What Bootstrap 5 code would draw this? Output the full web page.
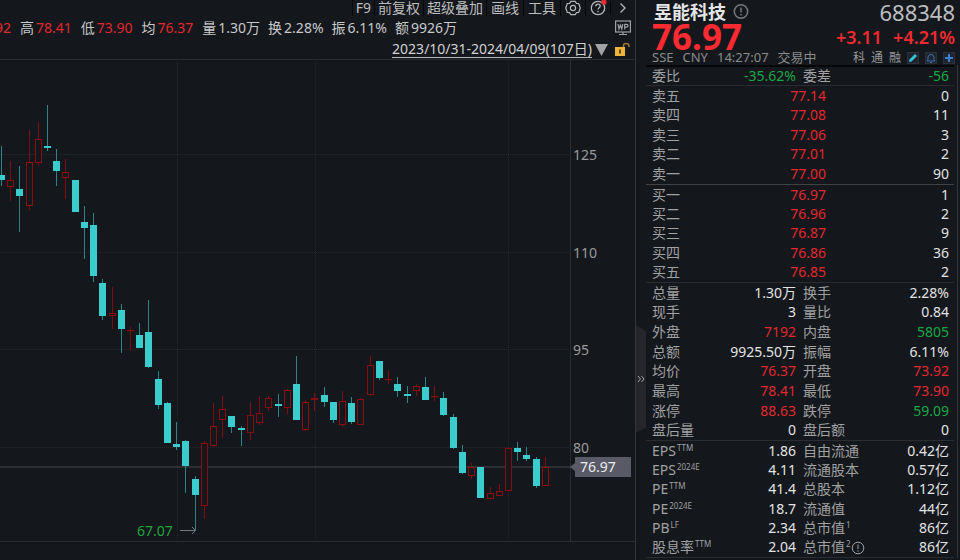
<!DOCTYPE html>
<html lang="zh-CN">
<head>
<meta charset="utf-8">
<meta name="viewport" content="width=device-width, initial-scale=1">
<title>昱能科技 688348</title>
<link href="https://cdn.jsdelivr.net/npm/bootstrap@5.3.0/dist/css/bootstrap.min.css" rel="stylesheet">
<style>
:root{--ink:#14171b;--up:#e2282f;--down:#18a846;--label:#a0a1a3;--value:#e2e3e5;--rule:#2a2c31}
body{background:var(--ink);color:#c8c9cb;font-family:"Noto Sans","Noto Sans CJK SC",sans-serif;font-size:14px;line-height:18px}
.up{color:var(--up)} .down{color:var(--down)}
svg{display:block;flex-shrink:0}
.toolbar{height:16px}
.tool{background:none;border:0;border-left:1px solid #07080a;color:#bcbdbf;padding:0 3px;line-height:16px;white-space:nowrap}
.icon-tool{width:25px;display:flex;justify-content:center}
.quotes{height:24px;padding-right:4px}
.quote-list{gap:8px;padding-right:158px;flex:1 1 0}
.quote-list span{white-space:nowrap}
.quote-list b{font-weight:400;margin-left:2px}
.quote-list .up{margin-right:1px}
.range-row{height:19px;padding-right:5px}
.range{color:#d0d1d3;text-decoration:none;border-bottom:1px solid #b5b6b8;line-height:16px;margin-right:3px}
.triangle{background:none;border:0;padding:0;margin-right:7px}
.pane-left{border-right:1px solid #34353a}
.chart{width:100%;height:auto}
.chart text{font-size:14px}
.pane-right{width:324px;padding:0 5px 0 10px;flex-shrink:0}
.pane-body{border-right:1px solid #34353a;margin-right:-3px;padding-right:3px}
.stock-name{font-size:18px;line-height:24px;font-weight:700;color:#e4e5e7;margin:0 7px 0 8px}
.code{font-size:22px;line-height:24px;color:#bcbdc0}
.headline{height:26px;padding-left:6px}
.last-price{font-size:35px;line-height:26px;font-weight:700;color:#fd2a32}
.change{font-size:18px;line-height:22px;font-weight:600;color:#f02a31;gap:11px}
.status{height:15px;padding-left:6px;font-size:13px;line-height:15px;color:#8b8c8f}
.status-text{gap:9px}
.marks{gap:6px;font-size:12px;color:#97989b}
.mark-btn{background:#20242c;border:1px solid #2b3039;padding:0;width:12px;height:12px}
.figures{width:100%;border-top:1px solid var(--rule);table-layout:fixed}
.figures th{font-weight:400;color:var(--label);padding:0 0 0 6px;line-height:18px;white-space:nowrap}
.figures td{padding:0 1px 0 0;text-align:right;line-height:18px;color:var(--value);white-space:nowrap}
.figures td:last-child{padding-right:5px}
.figures td.up{color:var(--up)} .figures td.down{color:var(--down)}
.figures sup{font-size:8px;line-height:8px;top:-5px;vertical-align:baseline;margin-left:1px}
.info-mark{margin-top:-2px}
.imbalance{height:20px;border-top:2px solid #050607}
.asks{height:99px}
.bids{height:98px;border-top-color:#414248}
.trade{height:158px}
.funds{height:118px;border-bottom:1px solid var(--rule)}
.depth{height:19px}
.c-label{width:84px}.c-price{width:97px}
.s-label{width:66px}.s-value{width:85px}.s-label2{width:76px}
.fold{position:absolute;left:0;top:58%;width:10px;height:108px;padding:0;border:0;background:#25252b;color:#a0a1a3;clip-path:polygon(0 0,100% 6%,100% 95%,0 100%)}
</style>
<script src="https://cdn.jsdelivr.net/npm/bootstrap@5.3.0/dist/js/bootstrap.bundle.min.js"></script>
</head>
<body>
<div class="d-flex min-vh-100 overflow-hidden">
  <main class="pane-left flex-grow-1 overflow-hidden d-flex flex-column">
    <div class="toolbar d-flex justify-content-end align-items-center">
      <button class="tool">F9</button>
      <button class="tool">前复权</button>
      <button class="tool">超级叠加</button>
      <button class="tool px-1">画线</button>
      <button class="tool px-1">工具</button>
      <button class="tool icon-tool" aria-label="设置"><svg width="16" height="16" viewBox="0 0 16 16" fill="none" stroke="#b4b5b7" stroke-width="1.2" stroke-linejoin="round"><path d="M5.6 1.4h4.8l1 2 2.3.1 1.5 4.5-1.5 4.5-2.3.1-1 2H5.6l-1-2-2.3-.1L.8 8l1.5-4.5 2.3-.1z"/><circle cx="8" cy="8" r="2.6"/></svg></button>
      <button class="tool icon-tool" aria-label="帮助"><svg width="17" height="16" viewBox="0 0 17 16" fill="none" stroke="#b4b5b7" stroke-width="1.3"><circle cx="8" cy="8" r="6.7"/><path d="M5.8 6.3c0-1.5 1-2.2 2.2-2.2s2.2.8 2.2 2c0 1.600-2.200 1.700-2.200 3.500"/><path d="M8 10.700v1.500"/><circle cx="14" cy="2" r="2.600" fill="#e8282e" stroke="none"/></svg></button>
      <button class="tool icon-tool" aria-label="更多"><svg width="10" height="12" viewBox="0 0 10 12" fill="none" stroke="#b4b5b7" stroke-width="1.4"><path d="M2.500 1.500 7 6l-4.500 4.500"/></svg></button>
    </div>
    <div class="quotes d-flex align-items-center">
      <div class="quote-list d-flex justify-content-end overflow-hidden">
        <span>开<b class="up">73.92</b></span><span>高<b class="up">78.41</b></span><span>低<b class="up">73.90</b></span><span>均<b class="up">76.37</b></span><span>量<b>1.30万</b></span><span>换<b>2.28%</b></span><span>振<b>6.11%</b></span><span>额<b>9926万</b></span>
      </div>
      <svg width="16" height="16" viewBox="0 0 16 16" fill="none" stroke="#a0a1a5" stroke-width="1.2"><rect x=".6" y="1" width="14.8" height="11"/><path d="M8 12v2M4 14.500h8M3 4l1 5 1.400-4L6.800 9l1-5M9.700 9.500V4.300h1.800q1.500 0 1.500 1.400t-1.500 1.400H9.700"/></svg>
    </div>
    <div class="range-row d-flex justify-content-end align-items-center">
      <a class="range" href="#">2023/10/31-2024/04/09(107日)</a>
      <button class="triangle" aria-label="选择区间"><svg width="13" height="12" viewBox="0 0 13 12"><path d="M0 0h13L6.500 12z" fill="#a2a2a4"/></svg></button>
      <svg width="15" height="15" viewBox="0 0 15 15"><rect y="5" width="10" height="9" fill="#f0b43c"/><path d="M5 7.500v4" stroke="#403014" stroke-width="1.600"/><path d="M8.500 5V3.500q0-2 2.700-2t2.700 2V5" fill="none" stroke="#a27a30" stroke-width="1.500"/></svg>
    </div>
    <svg class="chart" id="chart" viewBox="0 0 635 501" role="img" aria-label="日K线图">
      <g stroke="#26282c" stroke-width="1">
        <path d="M0 .5h635M570.500 0v482M0 482.500h635" stroke="#2b2d31"/>
        <path d="M0 95.500h570M0 193.500h570M0 290.500h570M0 388.500h570M177.500 0v482M315.500 0v482M508.500 0v482" stroke-dasharray="1 1"/>
      </g>
      <path d="M0 408h575" stroke="#47494c"/>
      <g id="candles"></g>
      <g fill="#9a9b9e"><text x="573" y="101">125</text><text x="573" y="199">110</text><text x="573" y="296">95</text><text x="573" y="394">80</text></g>
      <path d="M570 408l5-4v-6h56v20h-56v-6z" fill="#5a5a66"/>
      <text x="580" y="413" fill="#ededf0">76.97</text>
      <text x="137" y="477" fill="#20a53e">67.07</text>
      <path d="M180 471.500h15M192 468l3.500 3.500-3.500 3.500" fill="none" stroke="#77787b"/>
    </svg>
  </main>

  <aside class="pane-right position-relative">
    <button class="fold" aria-label="收起"><svg width="10" height="10" viewBox="0 0 10 10" fill="none" stroke="#a0a1a3"><path d="M2 2l2.500 3L2 8M5.500 2 8 5 5.500 8"/></svg></button>
    <header>
      <div class="d-flex align-items-center">
        <h1 class="stock-name">昱能科技</h1>
        <svg width="16" height="16" viewBox="0 0 16 16" fill="none" stroke="#77787b" stroke-width="1.500"><circle cx="8" cy="7.500" r="6.700"/><path d="M8 3.500v5M8 10v1.500"/></svg>
        <span class="code ms-auto">688348</span>
      </div>
      <div class="headline d-flex align-items-center justify-content-between">
        <span class="last-price">76.97</span>
        <span class="change d-flex"><span>+3.11</span><span>+4.21%</span></span>
      </div>
      <div class="status d-flex align-items-center justify-content-between">
        <span class="status-text d-flex"><span>SSE</span><span>CNY</span><span>14:27:07</span><span>交易中</span></span>
        <span class="marks d-flex align-items-center"><span>科</span><span>通</span><span>融</span>
          <button class="mark-btn" aria-label="画笔"><svg width="10" height="10" viewBox="0 0 10 10"><path d="M1 9l.5-2.500L7 1l2 2-5.500 5.500z" fill="#35c4d8"/></svg></button>
          <button class="mark-btn" aria-label="提醒"><svg width="10" height="10" viewBox="0 0 10 10" fill="none" stroke="#3a70b8"><path d="M1 8h8L8 6.500V4Q7.500 1.500 5 1.500T2 4v2.500zM4 9.500h2"/></svg></button>
          <button class="mark-btn" aria-label="添加"><svg width="10" height="10" viewBox="0 0 10 10"><path d="M5 1v8M1 5h8" stroke="#3d7fd0" stroke-width="2"/></svg></button>
        </span>
      </div>
    </header>
    <div class="pane-body">
      <table class="figures imbalance">
        <colgroup><col class="s-label"><col class="s-value"><col class="s-label2"><col></colgroup>
        <tr><th>委比</th><td class="down">-35.62%</td><th>委差</th><td class="down">-56</td></tr>
      </table>
      <table class="figures asks">
        <colgroup><col class="c-label"><col class="c-price"><col></colgroup>
        <tr class="depth"><th>卖五</th><td class="up">77.14</td><td>0</td></tr>
        <tr class="depth"><th>卖四</th><td class="up">77.08</td><td>11</td></tr>
        <tr class="depth"><th>卖三</th><td class="up">77.06</td><td>3</td></tr>
        <tr class="depth"><th>卖二</th><td class="up">77.01</td><td>2</td></tr>
        <tr class="depth"><th>卖一</th><td class="up">77.00</td><td>90</td></tr>
      </table>
      <table class="figures bids">
        <colgroup><col class="c-label"><col class="c-price"><col></colgroup>
        <tr class="depth"><th>买一</th><td class="up">76.97</td><td>1</td></tr>
        <tr class="depth"><th>买二</th><td class="up">76.96</td><td>2</td></tr>
        <tr class="depth"><th>买三</th><td class="up">76.87</td><td>9</td></tr>
        <tr class="depth"><th>买四</th><td class="up">76.86</td><td>36</td></tr>
        <tr class="depth"><th>买五</th><td class="up">76.85</td><td>2</td></tr>
      </table>
      <table class="figures trade">
        <colgroup><col class="s-label"><col class="s-value"><col class="s-label2"><col></colgroup>
        <tr><th>总量</th><td>1.30万</td><th>换手</th><td>2.28%</td></tr>
        <tr><th>现手</th><td>3</td><th>量比</th><td>0.84</td></tr>
        <tr><th>外盘</th><td class="up">7192</td><th>内盘</th><td class="down">5805</td></tr>
        <tr><th>总额</th><td>9925.50万</td><th>振幅</th><td>6.11%</td></tr>
        <tr><th>均价</th><td class="up">76.37</td><th>开盘</th><td class="up">73.92</td></tr>
        <tr><th>最高</th><td class="up">78.41</td><th>最低</th><td class="up">73.90</td></tr>
        <tr><th>涨停</th><td class="up">88.63</td><th>跌停</th><td class="down">59.09</td></tr>
        <tr><th>盘后量</th><td>0</td><th>盘后额</th><td>0</td></tr>
      </table>
      <table class="figures funds">
        <colgroup><col class="s-label"><col class="s-value"><col class="s-label2"><col></colgroup>
        <tr><th>EPS<sup>TTM</sup></th><td>1.86</td><th>自由流通</th><td>0.42亿</td></tr>
        <tr><th>EPS<sup>2024E</sup></th><td>4.11</td><th>流通股本</th><td>0.57亿</td></tr>
        <tr><th>PE<sup>TTM</sup></th><td>41.4</td><th>总股本</th><td>1.12亿</td></tr>
        <tr><th>PE<sup>2024E</sup></th><td>18.7</td><th>流通值</th><td>44亿</td></tr>
        <tr><th>PB<sup>LF</sup></th><td>2.34</td><th>总市值<sup>1</sup></th><td>86亿</td></tr>
        <tr><th>股息率<sup>TTM</sup></th><td>2.04</td><th>总市值<sup>2</sup><svg class="info-mark d-inline-block align-middle" width="14" height="14" viewBox="0 0 14 14" fill="none" stroke="#a0a1a3"><circle cx="7" cy="7" r="5.800"/><path d="M7 3.500v4.500M7 9.300v1.400"/></svg></th><td>86亿</td></tr>
      </table>
    </div>
  </aside>
</div>
<script>
// Each candle: high, body top, body bottom, low, rising (1) or falling (0)
const candles = [
[87,116,121,127,0],[102,121,128,142,1],[107,130,137,173,0],[71,103,147,151,1],[63,80,104,107,1],[46,87,89,92,0],[90,102,112,127,0],[100,113,119,140,1],[121,121,153,153,0],[147,163,169,200,0],
[154,166,217,223,0],[220,224,257,261,0],[228,254,257,270,1],[245,251,270,294,0],[268,271,271,292,1],[264,276,289,289,0],[241,273,308,309,0],[312,320,346,350,0],[343,344,384,384,0],[363,385,388,391,0],
[381,382,407,434,0],[417,420,436,471,0],[382,384,447,460,1],[344,367,387,388,1],[337,350,361,379,1],[357,357,368,374,0],[367,369,371,387,0],[343,356,374,381,1],[337,354,364,366,1],[337,339,349,352,1],
[335,345,347,358,0],[330,331,349,355,1],[297,325,361,361,0],[341,343,371,372,1],[334,339,341,352,1],[328,336,343,348,0],[343,343,361,364,0],[332,342,366,368,1],[338,344,363,365,0],[339,340,366,366,1],
[297,306,336,337,1],[302,302,319,321,0],[311,320,320,325,1],[318,325,332,338,0],[327,335,337,344,0],[325,327,332,337,1],[318,328,341,341,0],[327,337,337,342,1],[333,339,356,357,0],[355,358,389,390,0],
[386,393,414,415,0],[404,408,417,420,1],[408,408,439,439,0],[428,434,440,440,1],[425,432,437,437,1],[388,389,432,432,1],[383,389,393,402,0],[388,396,400,402,0],[398,400,427,429,0],[398,408,427,427,1]];
const layer = document.getElementById('candles');
const add = (name, attrs) => {
  const el = document.createElementNS('http://www.w3.org/2000/svg', name);
  for (const k in attrs) el.setAttribute(k, attrs[k]);
  layer.appendChild(el);
};
candles.forEach(([high, top, bottom, low, rising], i) => {
  const x = Math.round(1.4 + i * 9.22 - 0.5);
  if (rising) {
    add('path', {d: `M${x + .5} ${high}V${top}M${x + .5} ${bottom}V${low}`, stroke: '#800c11'});
    add('rect', {x: x - 2.5, y: top + .5, width: 6, height: Math.max(bottom - top - 1, 0.1), fill: '#14171b', stroke: '#8a0b10'});
  } else {
    add('path', {d: `M${x + .5} ${high}V${low}`, stroke: '#2b8587'});
    add('rect', {x: x - 3, y: top, width: 7, height: Math.max(bottom - top, 1), fill: '#3bcccd'});
  }
});
</script>
</body>
</html>
